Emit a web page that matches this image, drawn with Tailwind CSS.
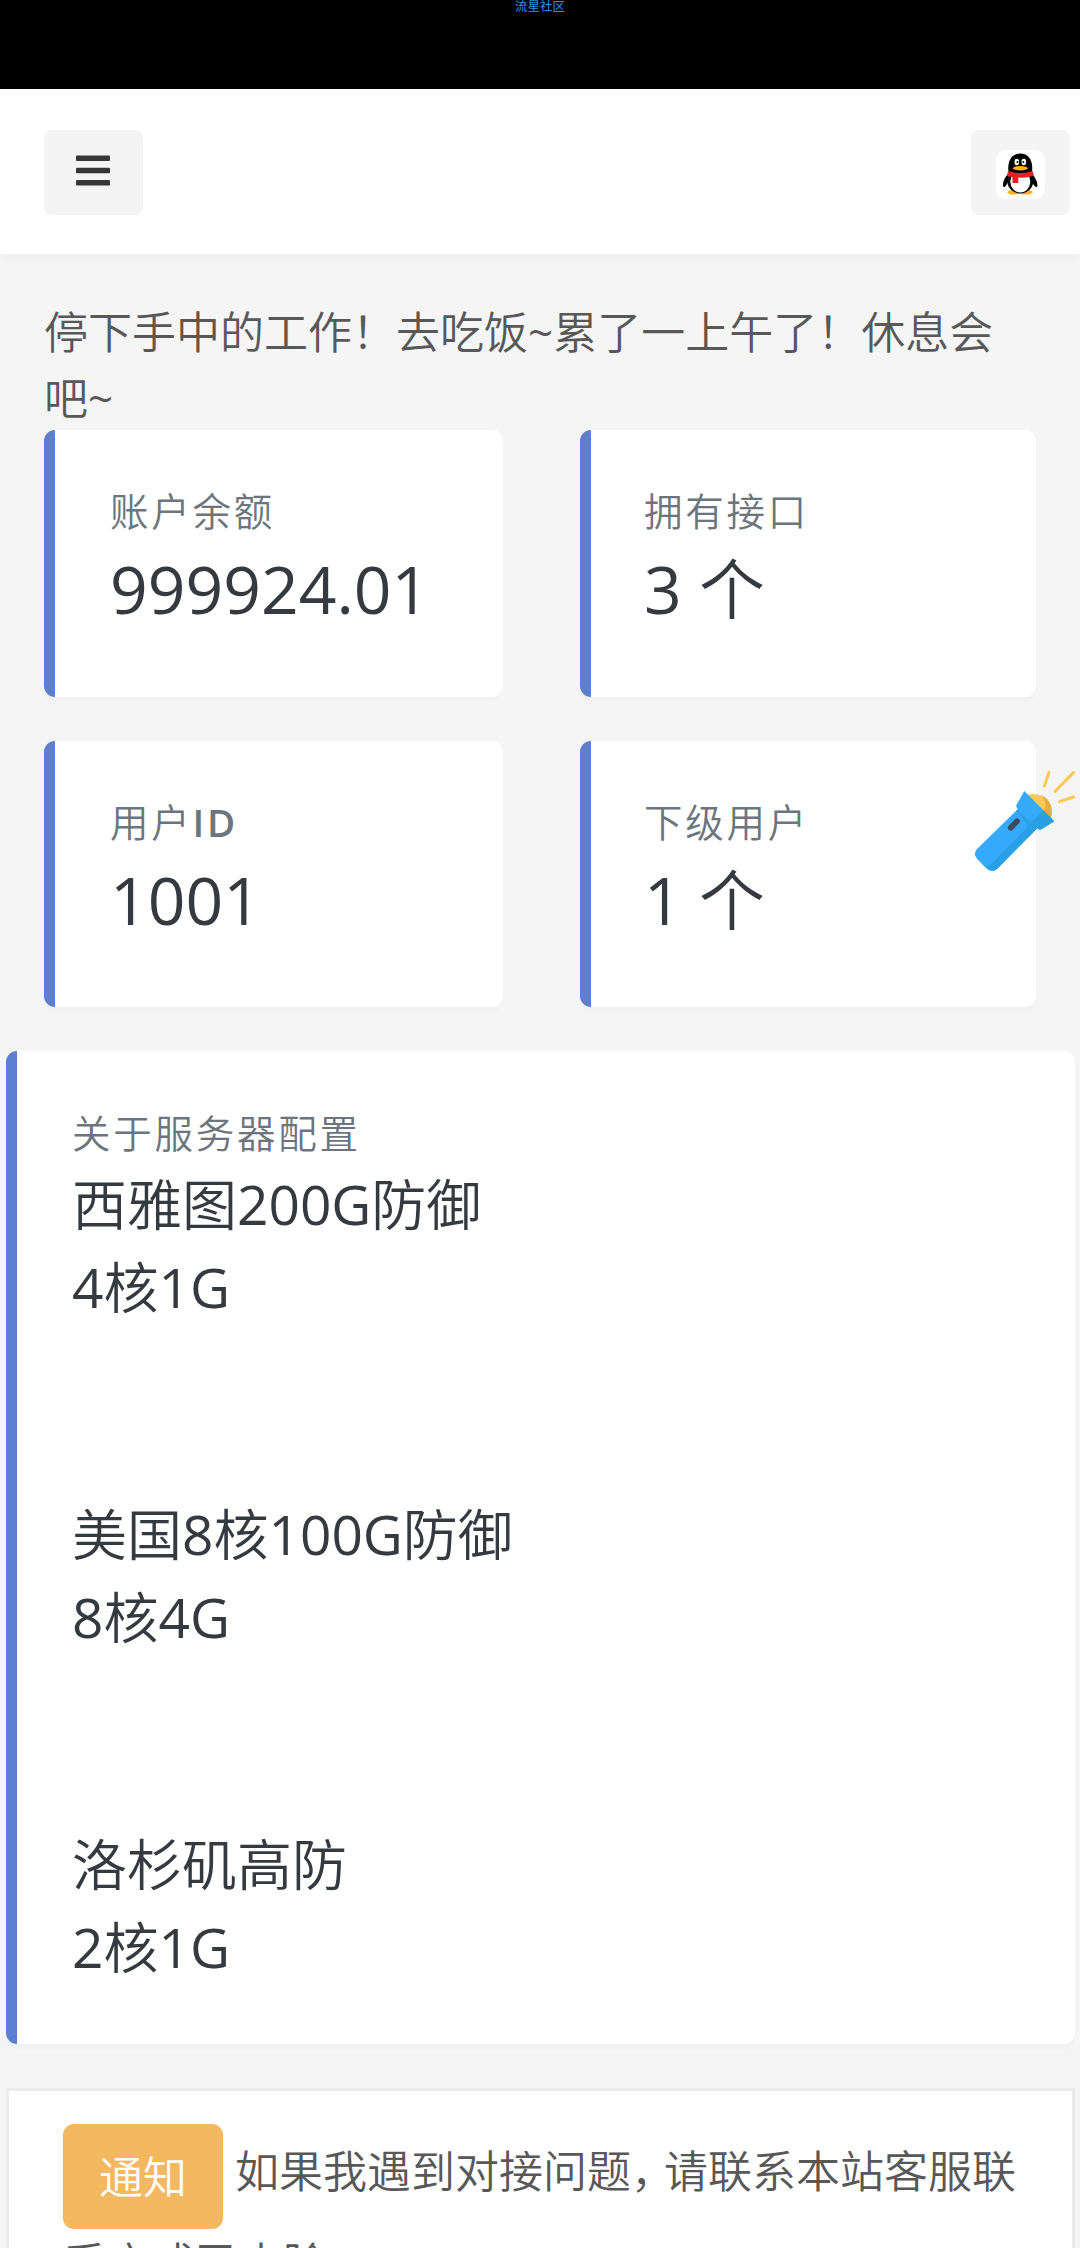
<!DOCTYPE html>
<html lang="zh-CN">
<head>
  <meta charset="UTF-8" />
  <title>流星社区</title>
  <script src="https://cdn.jsdelivr.net/npm/@tailwindcss/browser@4"></script>
</head>
<body class="bg-[#f5f5f5] text-[#585858] h-[2248px] overflow-hidden relative font-[350] font-['Open_Sans','Noto_Sans_CJK_SC',sans-serif] text-[44px] leading-[66px]">
  <!-- status bar -->
  <div class="h-[89px] bg-black flex justify-center">
    <span class="text-[12.5px] leading-[13px] text-[#2f8fe6] font-normal">流星社区</span>
  </div>

  <header class="h-[165px] bg-white flex items-center justify-between pl-11 pr-[10px] pt-[2px] shadow-[0_3px_14px_rgba(0,0,0,0.04)]">
    <button class="w-[99px] h-[85px] rounded-lg bg-[#f4f4f4] flex items-center justify-center">
      <svg class="w-[34px] h-[32px] -mt-[3px] mr-[2px]" viewBox="0 0 34 32" fill="#373737">
        <rect y="0.5" width="34" height="5.6" rx="1" />
        <rect y="12.7" width="34" height="5.6" rx="1" />
        <rect y="24.9" width="34" height="5.6" rx="1" />
      </svg>
    </button>
    <button class="w-[99px] h-[85px] rounded-lg bg-[#f4f4f4] flex items-center justify-center">
      <svg class="w-[49px] h-[49px] mt-[3px]" viewBox="0 0 49 49">
        <rect width="49" height="49" rx="10" fill="#fff" />
        <ellipse cx="18" cy="42.2" rx="6.5" ry="2.4" fill="#fbb413" />
        <ellipse cx="30" cy="42.2" rx="6.5" ry="2.4" fill="#fbb413" />
        <path d="M12 24C8 28 6 34 7.500 37C9 38 11 34 12 32Z M36 24C40 28 42.500 34 41 37C39.500 38 37 34 36 32Z" fill="#000" />
        <ellipse cx="24.300" cy="31" rx="13" ry="12.500" fill="#000" />
        <ellipse cx="24.300" cy="31.500" rx="10" ry="11" fill="#fff" />
        <path d="M12.500 22C11 9 17 3.500 24.300 3.500S37.500 9 36 22Q24 26 12.500 22Z" fill="#000" />
        <ellipse cx="20.800" cy="12" rx="2.300" ry="3.200" fill="#fff" />
        <ellipse cx="27.800" cy="12" rx="2.300" ry="3.200" fill="#fff" />
        <circle cx="21.500" cy="12" r="1" fill="#000" />
        <circle cx="27.300" cy="12" r="1" fill="#000" />
        <ellipse cx="24.300" cy="18.200" rx="7.500" ry="2.200" fill="#fbb413" />
        <path d="M12 21Q24 25 36.500 21L38 25.500Q30 28.500 22.300 27.500V33H16.500V27Q13 26.500 11 25.500Z" fill="#e71f24" />
      </svg>
    </button>
  </header>

  <main>
    <p class="px-11 pt-[45px] h-[176px]">停下手中的工作！去吃饭<span class="font-medium">~</span>累了一上午了！休息会吧<span class="font-medium">~</span></p>

    <div class="grid grid-cols-[459px_456px] gap-x-[77px] gap-y-11 pl-11">
      <div class="h-[267px] bg-white rounded-[11px] border-l-[11px] border-[#5c80d1] pl-[55px] pt-[48px] shadow-[0_5px_3px_rgba(0,0,0,0.015)]">
        <div class="text-[38.5px] leading-[66px] tracking-[2.75px] text-[#6c757d]">账户余额</div>
        <div class="text-[66px] leading-[89px] text-[#343a40] font-normal">999924.01</div>
      </div>
      <div class="h-[267px] bg-white rounded-[11px] border-l-[11px] border-[#5c80d1] pl-[53px] pt-[48px] shadow-[0_5px_3px_rgba(0,0,0,0.015)]">
        <div class="text-[38.5px] leading-[66px] tracking-[2.75px] text-[#6c757d]">拥有接口</div>
        <div class="text-[66px] leading-[89px] text-[#343a40]"><span class="font-normal">3 </span>个</div>
      </div>
      <div class="h-[266px] bg-white rounded-[11px] border-l-[11px] border-[#5c80d1] pl-[55px] pt-[48px] shadow-[0_5px_3px_rgba(0,0,0,0.015)]">
        <div class="text-[38.5px] leading-[66px] tracking-[2.75px] text-[#6c757d]">用户<span class="font-semibold">ID</span></div>
        <div class="text-[66px] leading-[89px] text-[#343a40] font-normal">1001</div>
      </div>
      <div class="h-[266px] bg-white rounded-[11px] border-l-[11px] border-[#5c80d1] pl-[53px] pt-[48px] shadow-[0_5px_3px_rgba(0,0,0,0.015)]">
        <div class="text-[38.5px] leading-[66px] tracking-[2.75px] text-[#6c757d]">下级用户</div>
        <div class="text-[66px] leading-[89px] text-[#343a40]"><span class="font-normal">1 </span>个</div>
      </div>
    </div>

    <div class="mt-11 ml-[6px] mr-[5px] h-[993px] bg-white rounded-[11px] border-l-[11px] border-[#5c80d1] pl-[55px] pt-[49px] shadow-[0_5px_3px_rgba(0,0,0,0.015)]">
      <div class="text-[38.5px] leading-[66px] tracking-[2.75px] text-[#6c757d]">关于服务器配置</div>
      <div class="-mt-[3px] text-[55px] leading-[82.5px] text-[#343a40]">
        西雅图<span class="font-normal">200G</span>防御<br />
        <span class="font-normal">4</span>核<span class="font-normal">1G</span><br />
        <br />
        <br />
        美国<span class="font-normal">8</span>核<span class="font-normal">100G</span>防御<br />
        <span class="font-normal">8</span>核<span class="font-normal">4G</span><br />
        <br />
        <br />
        洛杉矶高防<br />
        <span class="font-normal">2</span>核<span class="font-normal">1G</span>
      </div>
    </div>

    <!-- notice -->
    <div class="mt-11 ml-[6px] mr-[5px] h-[160px] overflow-hidden bg-white border-[3px] border-b-0 border-[#ebebeb] pl-[54px] pt-[33px]">
      <div class="flex">
        <span class="w-[160px] h-[105px] rounded-[11px] bg-[#f4b860] text-white flex items-center justify-center">通知</span>
        <span class="ml-3 pt-[14px] whitespace-nowrap">如果我遇到对接问题<span class="tracking-[-11px]">，</span>请联系本站客服联</span>
      </div>
      <p class="mt-[1px]">系方式已去除</p>
    </div>
  </main>

  <!-- floating flashlight -->
  <svg class="absolute left-[950px] top-[750px] w-[130px] h-[140px]" viewBox="0 0 390 420">
    <path d="M230 135C275 120 320 160 302 206Z" fill="#ffc857" />
    <path d="M272 134C300 145 312 175 302 206L280 190C292 165 284 145 272 134Z" fill="#e6ac41" />
    <path d="M203 178L262 235L142 356Q126 370 110 356L81 326Q68 311 81 297Z" fill="#35aafb" />
    <path d="M203 178L262 235L142 356Q126 370 108 347Q118 348 128 338L228 236Q237 228 229 217L198 183Z" fill="#29a0e5" />
    <path d="M223 123L313 214L270 240L262 235L243 218L203 178L198 167Z" fill="#35aafb" />
    <path d="M280 181L313 214L270 240L262 235L243 218Z" fill="#29a0e5" />
    <path d="M182 233L201 214" stroke="#3b4a5c" stroke-width="17" stroke-linecap="round" />
    <path d="M283 109L297 67M315 124L371 67M328 155L371 141" stroke="#ffc857" stroke-width="9" stroke-linecap="round" />
  </svg>
</body>
</html>
